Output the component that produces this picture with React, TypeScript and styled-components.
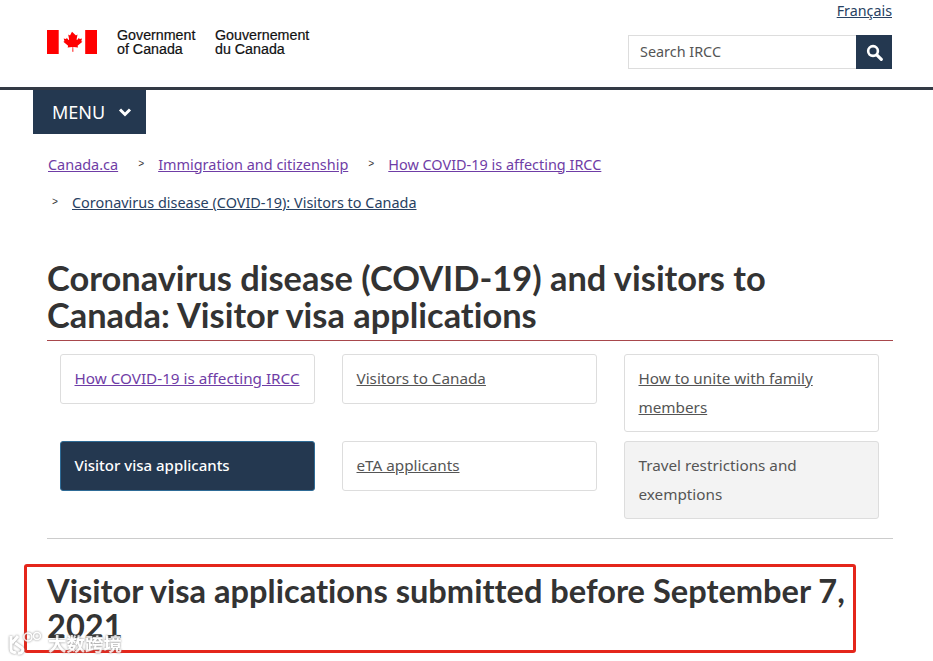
import React from 'react';
import styled, { createGlobalStyle } from 'styled-components';

const NAVY = '#243850';
const VISITED = '#6f3da6';
const LINK = '#284162';

const navItems = [
  { label: 'How COVID-19 is affecting IRCC', kind: 'visited' },
  { label: 'Visitors to Canada', kind: 'link' },
  { label: 'How to unite with family members', kind: 'link' },
  { label: 'Visitor visa applicants', kind: 'active' },
  { label: 'eTA applicants', kind: 'link' },
  { label: 'Travel restrictions and exemptions', kind: 'muted' },
];

export default function App(): React.FunctionComponentElement<JSX.Element> {
  return (
    <Page>
      <GlobalStyle />
      <Header>
        <Brand>
          <Flag viewBox="0 0 50 24" aria-hidden="true">
            <rect x="0" y="0" width="11.7" height="24" fill="#f00" />
            <rect x="38.2" y="0" width="11.8" height="24" fill="#f00" />
            <path
              fill="#f00"
              transform="translate(25 12) scale(0.86) translate(-25 -12.4)"
              d="M25 .6l-2 3.800c-.2.400-.6.300-1 .1l-1.400-.7 1 5.300c.2 1-.5 1-.8.6l-2-2.300-.4 1.200c0 .2-.2.300-.5.300l-2.600-.6.7 2.500c.1.500.3.800-.2 1l-.9.400 5.300 4.300c.2.200.3.500.2.800l-.5 1.500 5.300-.6c.2 0 .4.100.4.400l-.2 5.200h1.200l-.2-5.200c0-.3.200-.4.400-.4l5.300.6-.5-1.500c-.1-.3 0-.6.200-.8l5.300-4.300-.9-.4c-.5-.2-.3-.5-.2-1l.7-2.500-2.600.6c-.3 0-.5-.1-.5-.3l-.4-1.200-2 2.300c-.3.400-1 .4-.8-.6l1-5.300-1.400.7c-.4.200-.8.300-1-.1z"
            />
          </Flag>
          <Wordmark>Government<br />of Canada</Wordmark>
          <Wordmark>Gouvernement<br />du Canada</Wordmark>
        </Brand>
        <Tools>
          <LangLink href="#">Français</LangLink>
          <Search>
            <SearchField>Search IRCC</SearchField>
            <SearchButton aria-label="Search">
              <svg width="17" height="17" viewBox="0 0 15 15" aria-hidden="true">
                <circle cx="6.200" cy="6.200" r="4.300" fill="none" stroke="#fff" strokeWidth="2.300" />
                <path d="M9.500 9.500l4 4" stroke="#fff" strokeWidth="2.800" strokeLinecap="round" />
              </svg>
            </SearchButton>
          </Search>
        </Tools>
      </Header>

      <MenuButton>
        MENU
        <svg width="14" height="10" viewBox="0 0 14 10" aria-hidden="true">
          <path d="M2 2.500l5 5 5-5" fill="none" stroke="#fff" strokeWidth="3" />
        </svg>
      </MenuButton>

      <Main>
        <Crumbs>
          <CrumbRow>
            <Crumb $visited href="#">Canada.ca</Crumb>
            <Sep>&gt;</Sep>
            <Crumb $visited href="#">Immigration and citizenship</Crumb>
            <Sep>&gt;</Sep>
            <Crumb $visited href="#">How COVID-19 is affecting IRCC</Crumb>
          </CrumbRow>
          <CrumbRow>
            <FirstSep>&gt;</FirstSep>
            <Crumb href="#">Coronavirus disease (COVID-19): Visitors to Canada</Crumb>
          </CrumbRow>
        </Crumbs>

        <Title>Coronavirus disease (COVID-19) and visitors to Canada: Visitor visa applications</Title>

        <NavGrid>
          {navItems.map((item) => (
            <NavCard key={item.label} $kind={item.kind}>
              {item.kind === 'link' || item.kind === 'visited' ? (
                <NavLink href="#" $kind={item.kind}>{item.label}</NavLink>
              ) : (
                item.label
              )}
            </NavCard>
          ))}
        </NavGrid>

        <Rule />

        <Subtitle>Visitor visa applications submitted before September 7, 2021</Subtitle>
      </Main>

      <Highlight />
      <Watermark>
        <svg width="34" height="26" viewBox="0 0 34 26" aria-hidden="true">
          <path d="M3 6v13c0 3 3 4 5 3M4 13l6-7M7 13l7 5c2 2 0 6-4 5" fill="none" stroke="#fff" strokeWidth="3" />
          <circle cx="20" cy="7" r="4" fill="none" stroke="#fff" strokeWidth="1.600" />
          <circle cx="29" cy="6" r="3.500" fill="none" stroke="#fff" strokeWidth="1.600" />
        </svg>
        <WatermarkText>大数跨境</WatermarkText>
      </Watermark>
    </Page>
  );
}

// STYLES
const GlobalStyle = createGlobalStyle`
  html, body {
    margin: 0;
    height: 100%;
    overflow: hidden;
    background: #fff;
  }

  * {
    box-sizing: border-box;
  }
`;

const Page = styled.div`
  position: relative;
  width: 933px;
  height: 661px;
  overflow: hidden;
  background: #fff;
  color: #333;
  font-family: 'Noto Sans', sans-serif;
`;

const Header = styled.header`
  display: flex;
  justify-content: space-between;
  height: 90px;
  padding: 0 41px 0 47px;
  border-bottom: 3px solid #333a45;
`;

const Brand = styled.div`
  display: flex;
  align-items: flex-start;
  padding-top: 29px;
`;

const Flag = styled.svg`
  width: 50px;
  height: 24px;
  margin-top: 1px;
  margin-right: 20px;
`;

const Wordmark = styled.div`
  width: 98px;
  font-family: 'Liberation Sans', Arial, sans-serif;
  font-size: 14.250px;
  line-height: 13.500px;
  color: #111;
  -webkit-text-stroke: 0.2px #111;
`;

const Tools = styled.div`
  display: flex;
  flex-direction: column;
  align-items: flex-end;
`;

const LangLink = styled.a`
  margin-top: 1px;
  font-size: 14.300px;
  line-height: 19px;
  color: ${LINK};
`;

const Search = styled.div`
  display: flex;
  width: 264px;
  height: 34px;
  margin-top: 15px;
`;

const SearchField = styled.div`
  flex: 1;
  display: flex;
  align-items: center;
  padding: 0 0 2px 11px;
  border: 1px solid #ddd;
  border-right: 0;
  font-size: 14.400px;
  color: #555;
`;

const SearchButton = styled.button`
  display: flex;
  align-items: center;
  justify-content: center;
  width: 36px;
  padding: 0;
  border: 0;
  background: ${NAVY};
`;

const MenuButton = styled.div`
  display: flex;
  align-items: center;
  gap: 13px;
  width: 113px;
  height: 44px;
  margin-left: 33px;
  padding-left: 19px;
  background: ${NAVY};
  color: #fff;
  font-size: 18px;
`;

const Main = styled.main`
  padding: 0 40px 0 47px;
`;

const Crumbs = styled.nav`
  display: flex;
  flex-direction: column;
  gap: 18px;
  padding-top: 20px;
`;

const CrumbRow = styled.div`
  display: flex;
  align-items: center;
  height: 20px;
  font-size: 14.450px;
`;

const Crumb = styled.a<{ $visited?: boolean }>`
  margin-left: 1px;
  color: ${(props) => (props.$visited ? VISITED : LINK)};
`;

const Sep = styled.span`
  width: 39px;
  padding-left: 20px;
  font-family: 'Liberation Mono', monospace;
  font-size: 10px;
  color: #333;
`;

const FirstSep = styled(Sep)`
  width: 24px;
  padding-left: 5px;
`;

const Title = styled.h1`
  margin: 47px 0 0;
  padding-bottom: 7px;
  border-bottom: 1px solid #a8474c;
  font-family: Lato, sans-serif;
  font-size: 34.400px;
  font-weight: 700;
  font-variant-ligatures: none;
  line-height: 37px;
  color: #333;
`;

const NavGrid = styled.div`
  display: grid;
  grid-template-columns: repeat(3, 255px);
  align-items: start;
  column-gap: 27px;
  row-gap: 9px;
  padding: 13px 0 0 13px;
`;

const cardBg: Record<string, string> = { active: NAVY, muted: '#f3f3f3' };
const cardBorder: Record<string, string> = { active: '#2e6b96' };
const cardText: Record<string, string> = { active: '#fff', muted: '#555' };

const NavCard = styled.div<{ $kind: string }>`
  min-height: 50px;
  padding: 9px 14px 9px 13.500px;
  border: 1px solid ${(props) => cardBorder[props.$kind] ?? '#ddd'};
  border-radius: 3px;
  background: ${(props) => cardBg[props.$kind] ?? '#fff'};
  color: ${(props) => cardText[props.$kind] ?? '#333'};
  font-size: ${(props) => (props.$kind === 'active' ? '15px' : '15.250px')};
  font-weight: ${(props) => (props.$kind === 'active' ? 500 : 400)};
  line-height: 29px;
`;

const NavLink = styled.a<{ $kind: string }>`
  color: ${(props) => (props.$kind === 'visited' ? VISITED : '#555')};
`;

const Rule = styled.hr`
  height: 1px;
  margin: 19px 0 0;
  border: 0;
  background: #ccc;
`;

const Subtitle = styled.h2`
  margin: 34px 0 0;
  font-family: Lato, sans-serif;
  font-size: 32.600px;
  font-weight: 700;
  font-variant-ligatures: none;
  line-height: 35px;
  color: #333;
`;

const Highlight = styled.div`
  position: absolute;
  top: 564px;
  left: 24px;
  width: 832px;
  height: 89px;
  border: 3px solid #e4261b;
  border-radius: 3px;
  pointer-events: none;
`;

const Watermark = styled.div`
  position: absolute;
  top: 630px;
  left: 8px;
  display: flex;
  align-items: center;
  gap: 6px;
  opacity: 0.85;
  filter: drop-shadow(0 0 1px #777);
`;

const WatermarkText = styled.span`
  font-family: 'Noto Sans CJK SC', sans-serif;
  font-size: 18.500px;
  font-weight: 700;
  line-height: 24px;
  color: #fff;
`;
